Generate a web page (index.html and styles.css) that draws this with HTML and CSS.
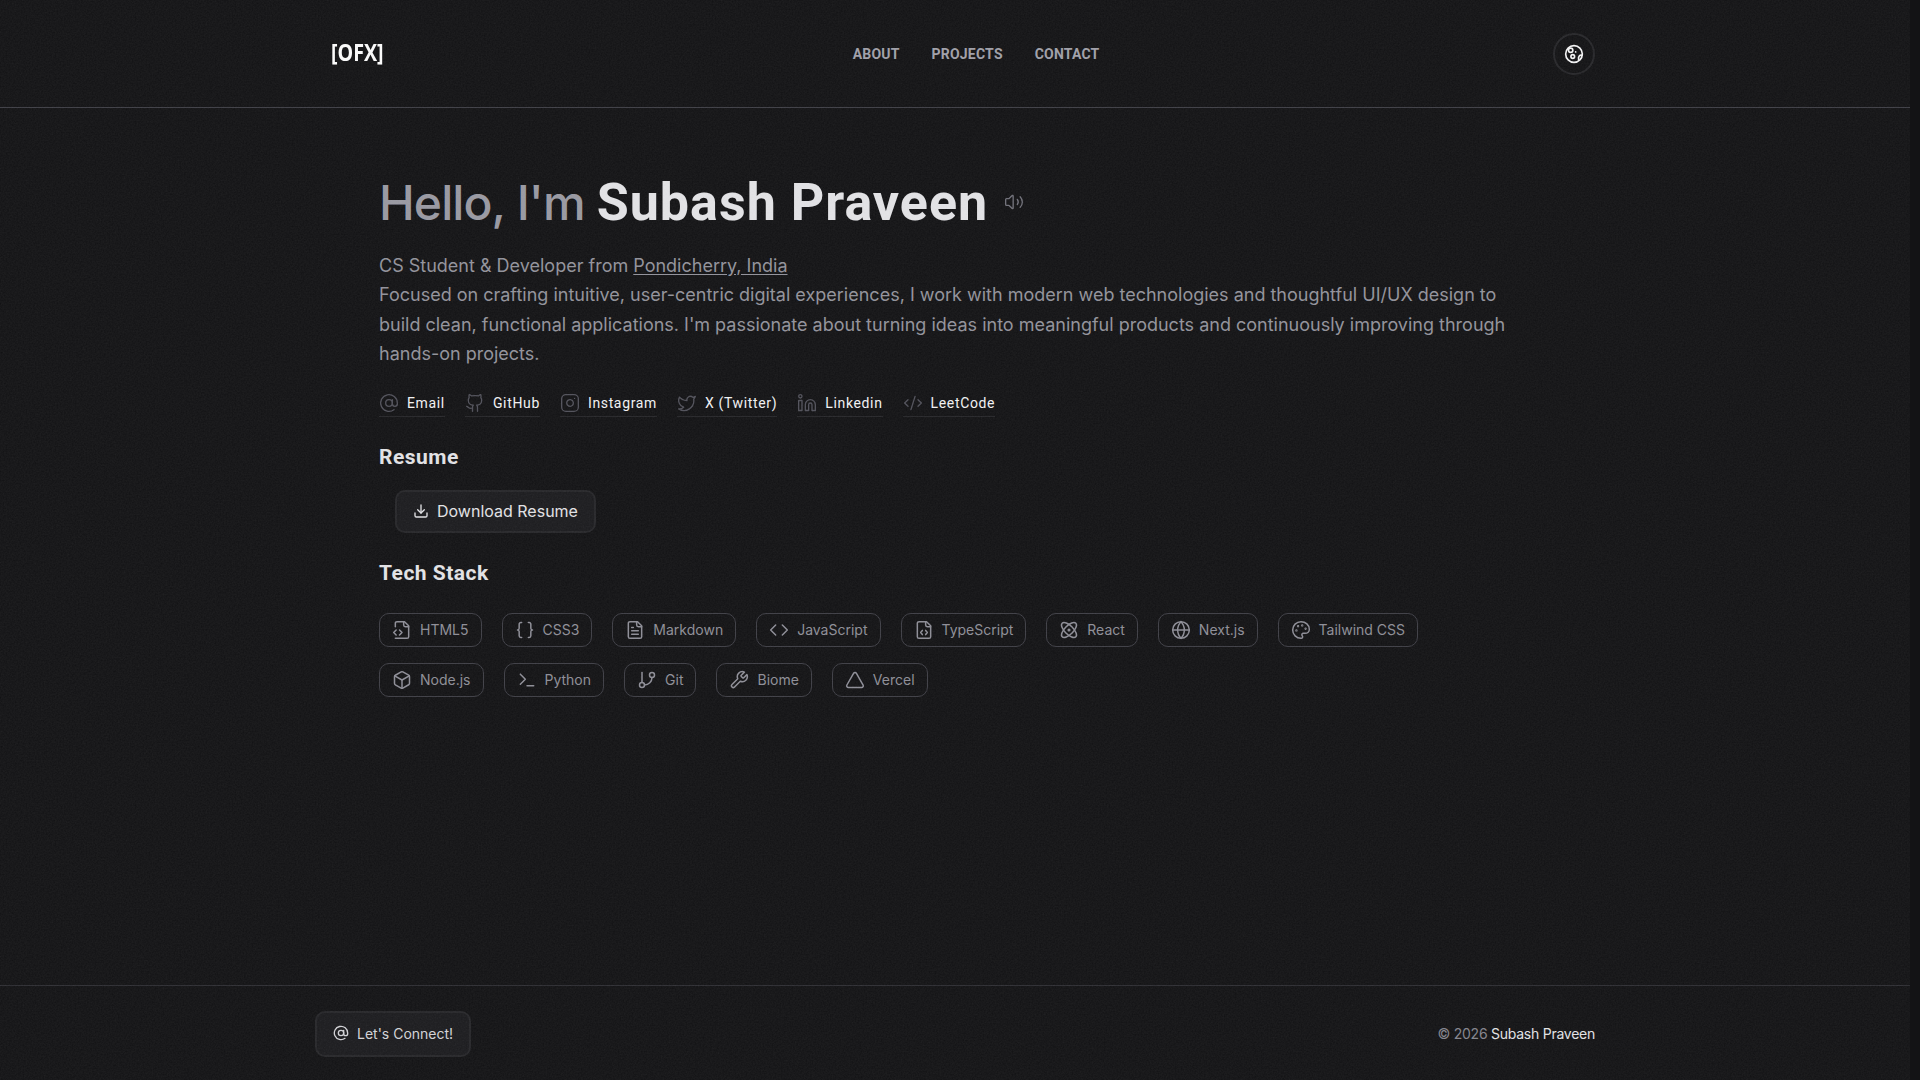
FILE: index.html
```html
<!DOCTYPE html>
<html lang="en">
<head>
<meta charset="utf-8">
<title>Subash Praveen</title>
<link rel="stylesheet" href="styles.css">
</head>
<body>
<svg class="grain" aria-hidden="true">
	<filter id="noise"><feTurbulence type="fractalNoise" baseFrequency="0.65" numOctaves="3" stitchTiles="stitch"/><feColorMatrix type="saturate" values="0"/></filter>
	<rect width="100%" height="100%" filter="url(#noise)"/>
</svg>
<div class="page">
	<header class="site_header">
		<div class="header_inner">
			<a class="logo" href="#">[OFX]</a>
			<nav class="main_nav">
				<a href="#">ABOUT</a>
				<a href="#">PROJECTS</a>
				<a href="#">CONTACT</a>
			</nav>
			<button class="theme_btn" type="button">
				<svg class="icon" viewBox="0 0 24 24"><circle cx="12" cy="12" r="10"/><circle cx="8" cy="7.5" r="2.6"/><circle cx="10.5" cy="15" r="2.2"/><path d="M21.5 13.5c-2.6-.6-4.6 1.6-4 5"/><path d="M14 9.5h.01"/></svg>
			</button>
		</div>
	</header>

	<main class="content">
		<h1 class="hello">
			<span class="hello_gray">Hello, I'm</span>
			<span class="hello_name">Subash Praveen</span>
			<svg class="icon speaker" viewBox="0 0 24 24"><path d="M11 4.702a.705.705 0 0 0-1.203-.498L6.413 7.587A1.4 1.4 0 0 1 5.416 8H3a1 1 0 0 0-1 1v6a1 1 0 0 0 1 1h2.416a1.4 1.4 0 0 1 .997.413l3.383 3.384A.705.705 0 0 0 11 19.298z"/><path d="M16 9a5 5 0 0 1 0 6"/><path d="M19.364 18.364a9 9 0 0 0 0-12.728"/></svg>
		</h1>

		<p class="intro">CS Student &amp; Developer from <a href="#">Pondicherry, India</a><br>Focused on crafting intuitive, user-centric digital experiences, I work with modern web technologies and thoughtful UI/UX design to build clean, functional applications. I'm passionate about turning ideas into meaningful products and continuously improving through hands-on projects.</p>

		<ul class="social">
			<li><a href="#"><svg class="icon" viewBox="0 0 24 24"><circle cx="12" cy="12" r="4"/><path d="M16 8v5a3 3 0 0 0 6 0v-1a10 10 0 1 0-4 8"/></svg>Email</a></li>
			<li><a href="#"><svg class="icon" viewBox="0 0 24 24"><path d="M15 22v-4a4.8 4.8 0 0 0-1-3.5c3 0 6-2 6-5.5.08-1.25-.27-2.48-1-3.5.28-1.15.28-2.35 0-3.5 0 0-1 0-3 1.5-2.64-.5-5.36-.5-8 0C6 2 5 2 5 2c-.3 1.15-.3 2.35 0 3.5A5.403 5.403 0 0 0 4 9c0 3.5 3 5.5 6 5.5-.39.49-.68 1.05-.85 1.65-.17.6-.22 1.23-.15 1.85v4"/><path d="M9 18c-4.51 2-5-2-7-2"/></svg>GitHub</a></li>
			<li><a href="#"><svg class="icon" viewBox="0 0 24 24"><rect x="2" y="2" width="20" height="20" rx="5"/><path d="M16 11.37A4 4 0 1 1 12.63 8 4 4 0 0 1 16 11.37z"/><path d="M17.5 6.5h.01"/></svg>Instagram</a></li>
			<li><a href="#"><svg class="icon" viewBox="0 0 24 24"><path d="M22 4s-.7 2.1-2 3.4c1.6 10-9.4 17.3-18 11.6 2.2.1 4.4-.6 6-2C3 15.5.5 9.6 3 5c2.2 2.6 5.6 4.1 9 4-.9-4.2 4-6.6 7-3.8 1.1 0 3-1.2 3-1.2z"/></svg>X (Twitter)</a></li>
			<li><a href="#"><svg class="icon" viewBox="0 0 24 24"><path d="M16 8a6 6 0 0 1 6 6v7h-4v-7a2 2 0 0 0-2-2 2 2 0 0 0-2 2v7h-4v-7a6 6 0 0 1 6-6z"/><rect x="2" y="9" width="4" height="12"/><circle cx="4" cy="4" r="2"/></svg>Linkedin</a></li>
			<li><a href="#"><svg class="icon" viewBox="0 0 24 24"><path d="m18 16 4-4-4-4"/><path d="m6 8-4 4 4 4"/><path d="m14.5 4-5 16"/></svg>LeetCode</a></li>
		</ul>

		<h2 class="section_title">Resume</h2>
		<a class="btn resume_btn" href="#">
			<svg class="icon" viewBox="0 0 24 24"><path d="M12 15V3"/><path d="M21 15v4a2 2 0 0 1-2 2H5a2 2 0 0 1-2-2v-4"/><path d="m7 10 5 5 5-5"/></svg>Download Resume
		</a>

		<h2 class="section_title stack_title">Tech Stack</h2>
		<ul class="stack">
			<li><svg class="icon" viewBox="0 0 24 24"><path d="M4 22h14a2 2 0 0 0 2-2V7l-5-5H6a2 2 0 0 0-2 2v4"/><path d="M14 2v4a2 2 0 0 0 2 2h4"/><path d="m5 12-3 3 3 3"/><path d="m9 18 3-3-3-3"/></svg>HTML5</li>
			<li><svg class="icon" viewBox="0 0 24 24"><path d="M8 3H7a2 2 0 0 0-2 2v5a2 2 0 0 1-2 2 2 2 0 0 1 2 2v5c0 1.1.9 2 2 2h1"/><path d="M16 21h1a2 2 0 0 0 2-2v-5c0-1.1.9-2 2-2a2 2 0 0 1-2-2V5a2 2 0 0 0-2-2h-1"/></svg>CSS3</li>
			<li><svg class="icon" viewBox="0 0 24 24"><path d="M15 2H6a2 2 0 0 0-2 2v16a2 2 0 0 0 2 2h12a2 2 0 0 0 2-2V7Z"/><path d="M14 2v4a2 2 0 0 0 2 2h4"/><path d="M10 9H8"/><path d="M16 13H8"/><path d="M16 17H8"/></svg>Markdown</li>
			<li><svg class="icon" viewBox="0 0 24 24"><path d="m16 18 6-6-6-6"/><path d="m8 6-6 6 6 6"/></svg>JavaScript</li>
			<li><svg class="icon" viewBox="0 0 24 24"><path d="M15 2H6a2 2 0 0 0-2 2v16a2 2 0 0 0 2 2h12a2 2 0 0 0 2-2V7Z"/><path d="M14 2v4a2 2 0 0 0 2 2h4"/><path d="M10 12.5 8 15l2 2.5"/><path d="m14 12.5 2 2.5-2 2.5"/></svg>TypeScript</li>
			<li><svg class="icon" viewBox="0 0 24 24"><circle cx="12" cy="12" r="1"/><path d="M20.2 20.2c2.04-2.03.02-7.36-4.5-11.9-4.54-4.52-9.87-6.54-11.9-4.5-2.04 2.03-.02 7.36 4.5 11.9 4.54 4.52 9.87 6.54 11.9 4.5Z"/><path d="M15.7 15.7c4.52-4.54 6.54-9.87 4.5-11.9-2.03-2.04-7.36-.02-11.9 4.5-4.52 4.54-6.54 9.87-4.5 11.9 2.03 2.04 7.36.02 11.9-4.5Z"/></svg>React</li>
			<li><svg class="icon" viewBox="0 0 24 24"><circle cx="12" cy="12" r="10"/><path d="M12 2a14.5 14.5 0 0 0 0 20 14.5 14.5 0 0 0 0-20"/><path d="M2 12h20"/></svg>Next.js</li>
			<li><svg class="icon" viewBox="0 0 24 24"><path d="M12 22a1 1 0 0 1 0-20 10 9 0 0 1 10 9 5 5 0 0 1-5 5h-2.25a1.75 1.75 0 0 0-1.4 2.8l.3.4a1.75 1.75 0 0 1-1.4 2.8z"/><circle cx="13.5" cy="6.5" r=".5"/><circle cx="17.5" cy="10.5" r=".5"/><circle cx="6.5" cy="12.5" r=".5"/><circle cx="8.5" cy="7.5" r=".5"/></svg>Tailwind CSS</li>
			<li><svg class="icon" viewBox="0 0 24 24"><path d="M21 8a2 2 0 0 0-1-1.73l-7-4a2 2 0 0 0-2 0l-7 4A2 2 0 0 0 3 8v8a2 2 0 0 0 1 1.73l7 4a2 2 0 0 0 2 0l7-4A2 2 0 0 0 21 16Z"/><path d="m3.3 7 8.7 5 8.7-5"/><path d="M12 22V12"/></svg>Node.js</li>
			<li><svg class="icon" viewBox="0 0 24 24"><path d="M12 19h8"/><path d="m4 17 6-6-6-6"/></svg>Python</li>
			<li><svg class="icon" viewBox="0 0 24 24"><path d="M6 3v12"/><circle cx="18" cy="6" r="3"/><circle cx="6" cy="18" r="3"/><path d="M18 9a9 9 0 0 1-9 9"/></svg>Git</li>
			<li><svg class="icon" viewBox="0 0 24 24"><path d="M14.7 6.3a1 1 0 0 0 0 1.4l1.6 1.6a1 1 0 0 0 1.4 0l3.77-3.77a6 6 0 0 1-7.94 7.94l-6.91 6.91a2.12 2.12 0 0 1-3-3l6.91-6.91a6 6 0 0 1 7.94-7.94l-3.76 3.76z"/></svg>Biome</li>
			<li><svg class="icon" viewBox="0 0 24 24"><path d="M13.73 4a2 2 0 0 0-3.46 0l-8 14A2 2 0 0 0 4 21h16a2 2 0 0 0 1.73-3Z"/></svg>Vercel</li>
		</ul>
	</main>

	<footer class="site_footer">
		<div class="footer_inner">
			<a class="btn connect_btn" href="#">
				<svg class="icon" viewBox="0 0 24 24"><circle cx="12" cy="12" r="4"/><path d="M16 8v5a3 3 0 0 0 6 0v-1a10 10 0 1 0-4 8"/></svg>Let's Connect!
			</a>
			<p class="copyright">© 2026 <span>Subash Praveen</span></p>
		</div>
	</footer>
</div>
</body>
</html>
```

FILE: styles.css
```css
* {margin:0; padding:0; box-sizing:border-box}
li {list-style:none}
a {color:inherit; text-decoration:none}

body {
	background-color:#131315;
	color:#a1a1aa;
	font-family:Inter, "Liberation Sans", sans-serif;
	overflow:hidden;
}

.grain {
	position:fixed;
	top:0;
	left:0;
	width:1910px;
	height:100%;
	opacity:.08;
	pointer-events:none;
}

.icon {
	width:20px;
	height:20px;
	flex:none;
	fill:none;
	stroke:currentColor;
	stroke-width:2;
	stroke-linecap:round;
	stroke-linejoin:round;
}

.page {
	width:1910px;
	height:1080px;
	display:flex;
	flex-direction:column;
}

/* header */
.site_header {
	height:108px;
	border-bottom:1px solid #3f3f46;
}
.header_inner {
	width:1280px;
	height:107px;
	margin:0 auto;
	padding-left:16px;
	display:flex;
	align-items:center;
	justify-content:space-between;
}
.logo {
	margin:0 -10px 4px 0;
	font-family:"Open Sans", sans-serif;
	font-size:24px;
	font-weight:700;
	color:#fafafa;
	transform:scaleX(.82);
	transform-origin:left center;
}
.main_nav {
	display:flex;
	gap:32px;
	margin-left:14px;
	font-family:Roboto, sans-serif;
	font-size:14px;
	font-weight:700;
	letter-spacing:.2px;
	color:#a1a1aa;
}
.theme_btn {
	width:42px;
	height:42px;
	border:2px solid #27272a;
	border-radius:50%;
	background:none;
	color:#f4f4f5;
	display:flex;
	align-items:center;
	justify-content:center;
}

/* main */
.content {
	flex:1;
	width:1152px;
	margin:0 auto;
	padding-top:62px;
}
.hello {
	display:flex;
	align-items:center;
	height:64px;
	font-size:48px;
	font-weight:500;
	white-space:nowrap;
}
.hello_gray {
	color:#9a9aa3;
	letter-spacing:-.9px;
}
.hello_name {
	margin-left:12px;
	color:#e4e4e7;
	font-family:Roboto, sans-serif;
	font-size:52px;
	font-weight:700;
	letter-spacing:1px;
}
.speaker {
	margin-left:16px;
	color:#71717a;
	stroke-width:1.6;
}
.intro {
	margin-top:17px;
	font-size:18px;
	line-height:29.4px;
	color:#93939c;
}
.intro a {text-decoration:underline; text-underline-offset:2px}

.social {
	display:flex;
	gap:20px;
	margin-top:21px;
}
.social a {
	display:flex;
	align-items:center;
	gap:8px;
	height:27px;
	border-bottom:1px solid #27272a;
	font-family:Roboto, sans-serif;
	font-size:14px;
	font-weight:400;
	letter-spacing:.65px;
	color:#f4f4f5;
}
.social .icon {color:#52525b; stroke-width:1.6}

.section_title {
	margin-top:26px;
	font-family:Roboto, sans-serif;
	font-size:21px;
	font-weight:700;
	line-height:28px;
	letter-spacing:.5px;
	color:#e4e4e7;
}

.btn {
	display:inline-flex;
	align-items:center;
	border:2px solid #27272a;
	background-color:#1c1c1f;
	color:#e4e4e7;
}
.btn .icon {width:16px; height:16px}
.resume_btn {
	margin:19px 0 0 16px;
	height:43px;
	padding:0 16px;
	gap:8px;
	border-radius:10px;
	font-size:16px;
}
.stack_title {margin-top:26px}

.stack {
	display:flex;
	flex-wrap:wrap;
	gap:16px 20px;
	width:1152px;
	margin-top:26px;
}
.stack li {
	display:flex;
	align-items:center;
	gap:8px;
	height:34px;
	padding:0 12px;
	border:1px solid #3f3f46;
	border-radius:10px;
	font-size:14px;
	color:#8f8f98;
}
.stack .icon {stroke-width:1.8}

/* footer */
.site_footer {
	height:95px;
	border-top:1px solid #2e2e33;
}
.footer_inner {
	width:1280px;
	height:94px;
	margin:0 auto;
	display:flex;
	align-items:center;
	justify-content:space-between;
}
.connect_btn {
	height:46px;
	margin-top:2px;
	padding:0 16px 2px;
	gap:8px;
	border-radius:10px;
	font-size:14px;
	color:#d4d4d8;
}
.copyright {font-size:14px; letter-spacing:-.25px; color:#85858e}
.copyright span {color:#e4e4e7}
```
